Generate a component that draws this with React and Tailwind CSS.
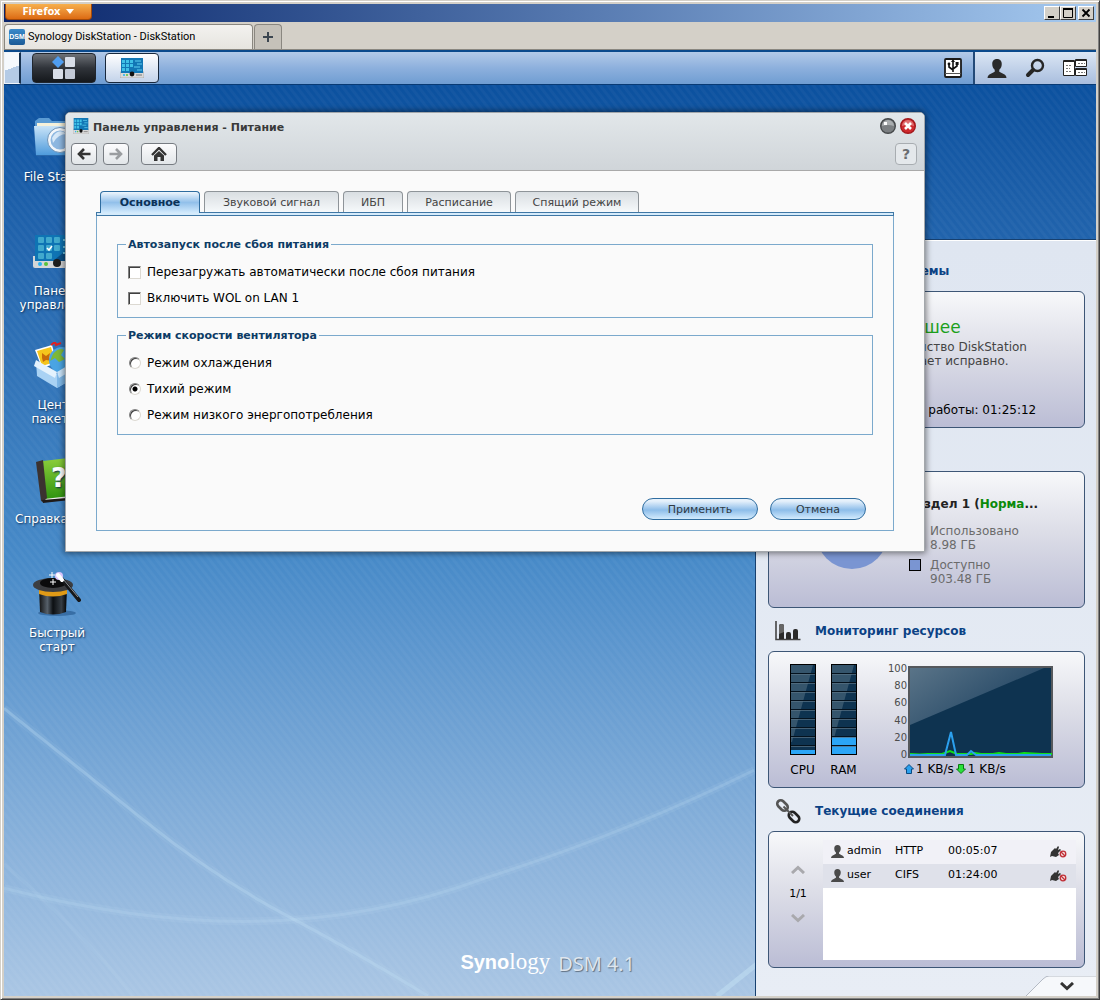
import React, { useState } from "react";

const desktopItems = [
  { id: "file", label: "File Station", icon: <FolderIcon /> },
  { id: "panel", label: "Панель управления", icon: <PanelIcon /> },
  { id: "packages", label: "Центр пакетов", icon: <PackageIcon /> },
  { id: "help", label: "Справка DSM", icon: <BookIcon /> },
  { id: "start", label: "Быстрый старт", icon: <HatIcon /> }
];

const tabs = [
  { label: "Основное", width: "w-[100px]" },
  { label: "Звуковой сигнал", width: "w-[135px]" },
  { label: "ИБП", width: "w-[60px]" },
  { label: "Расписание", width: "w-[104px]" },
  { label: "Спящий режим", width: "w-[124px]" }
];

const fanModes = [
  { id: "cool", label: "Режим охлаждения" },
  { id: "quiet", label: "Тихий режим" },
  { id: "low", label: "Режим низкого энергопотребления" }
];

const connections = [
  { user: "admin", type: "HTTP", time: "00:05:07", row: "bg-[#f1f1f7]" },
  { user: "user", type: "CIFS", time: "01:24:00", row: "bg-[#dfe1ea]" }
];

/* ---------- icons ---------- */

function FolderIcon() {
  return (
    <svg viewBox="0 0 48 48" className="size-12">
      <defs>
        <linearGradient id="folder" x1="0" y1="0" x2="0" y2="1">
          <stop offset="0" stopColor="#c9e4f8" />
          <stop offset="1" stopColor="#4f9bdc" />
        </linearGradient>
      </defs>
      <path d="M2 12V7l4-3h10l3 3h24v10H2z" fill="#5b9bd3" />
      <path d="M4 9h38v8H4z" fill="#f6f1da" />
      <path d="M1 12h46l-2 29H3z" fill="url(#folder)" />
      <path d="M3 41h42v1H3z" fill="#2a69ab" />
      <circle cx="27" cy="26" r="11" fill="#8db7e0" stroke="#f2f6fa" strokeWidth="3" />
      <circle cx="27" cy="26" r="12.500" fill="none" stroke="#6f94b8" />
      <path d="M19 24q6-11 15-4-9 0-14 9z" fill="#d6e8f8" />
      <path d="m35 34 7 8" stroke="#dde4ea" strokeWidth="4" />
    </svg>
  );
}

function PanelIcon() {
  return (
    <svg viewBox="0 0 48 48" className="size-12">
      <path d="M0 28h48v10q0 2-2 2H2q-2 0-2-2z" fill="#d4d6d8" />
      <path d="M2 7h44v26H2z" fill="#0f74b4" />
      <path d="M20 33 46 12v21z" fill="#0a4f86" />
      <g fill="#41a9cd">
        <rect x="5" y="9" width="6" height="6" rx="1" />
        <rect x="13" y="9" width="6" height="6" rx="1" />
        <rect x="21" y="9" width="6" height="6" rx="1" />
        <rect x="5" y="17" width="6" height="6" rx="1" />
        <rect x="13" y="17" width="6" height="6" rx="1" />
        <rect x="21" y="17" width="6" height="6" rx="1" />
        <rect x="5" y="25" width="6" height="6" rx="1" />
        <rect x="13" y="25" width="6" height="6" rx="1" />
      </g>
      <path d="M30 12h12M30 19h12M30 25h12" stroke="#6fc6e4" strokeWidth="2" />
      <path d="m14 20 2 2 3-4" stroke="#fff" strokeWidth="1.5" fill="none" />
      <circle cx="7" cy="36" r="2" fill="#28b2f4" />
      <circle cx="13" cy="36" r="2" fill="#58c23a" />
      <circle cx="24" cy="35" r="4" fill="#1d1d1d" />
      <path d="M32 36h12" stroke="#888" strokeWidth="2" />
    </svg>
  );
}

function PackageIcon() {
  return (
    <svg viewBox="0 0 48 48" className="size-12">
      <path d="m2 8 17-5 5 18-15 5z" fill="#fff" />
      <path d="m4 9 14-4 4 15-13 4z" fill="#f5c51c" />
      <path d="m9 11 4 3 4-3-1 5 3 3-6-1-3 2-1-4z" fill="#c86a08" />
      <circle cx="29" cy="18" r="13" fill="#4aa4e3" />
      <path d="M20 12q6-7 11-4l-3 5 4 4-6 3-4-4-5 3zM33 18l6-2-2 9-5-1z" fill="#7db83a" />
      <path d="m18 3 4-3 1 3 5-2" stroke="#d22" strokeWidth="2" fill="none" />
      <path d="M3 19 24 32 46 19v14L24 46 4 34z" fill="#a9d2f4" />
      <path d="M24 32 46 19v14L24 46z" fill="#7fb8e8" />
      <path d="m3 18 21 12-2 6L1 24z" fill="#e4f2fd" />
      <path d="m24 30 22-13 2 6-22 13z" fill="#c9e4fa" />
    </svg>
  );
}

function BookIcon() {
  return (
    <svg viewBox="0 0 48 48" className="size-12">
      <defs>
        <linearGradient id="book" x1="0" y1="0" x2="0" y2="1">
          <stop offset="0" stopColor="#8fd03c" />
          <stop offset="1" stopColor="#2f9410" />
        </linearGradient>
      </defs>
      <path d="m9 42 35-3 1 3-34 4z" fill="#f0f0f0" />
      <path d="m10 5 34-4 2 38-35 4z" fill="url(#book)" />
      <path d="m3 6 7-2 4 38-4 4-2-1z" fill="#3b3230" />
      <path d="m9 44 37-3v2l-36 4z" fill="#1f1a18" />
      <text x="18" y="31" className="fill-white font-['DejaVu_Sans'] text-[27px] font-bold">
        ?
      </text>
    </svg>
  );
}

function HatIcon() {
  return (
    <svg viewBox="0 0 48 48" className="size-12">
      <defs>
        <linearGradient id="hat" x1="0" y1="0" x2="1" y2="0">
          <stop offset="0" stopColor="#111" />
          <stop offset="0.3" stopColor="#56606a" />
          <stop offset="0.5" stopColor="#0c0f12" />
          <stop offset="0.8" stopColor="#363d44" />
          <stop offset="1" stopColor="#000" />
        </linearGradient>
      </defs>
      <ellipse cx="24" cy="43" rx="19" ry="3" fill="#24568c" opacity="0.6" />
      <path d="M6 18h28l-1 24q-13 5-26 0z" fill="url(#hat)" />
      <path d="M6 19h28v5q-14 5-28 0z" fill="#e09a16" />
      <ellipse cx="20" cy="15" rx="20" ry="7" fill="#3c3d40" />
      <ellipse cx="20" cy="13" rx="13" ry="5" fill="#0b0b0c" />
      <path d="m28 8 18 22" stroke="#17181a" strokeWidth="4" strokeLinecap="round" />
      <path d="m30 9 15 18" stroke="#8d9298" />
      <circle cx="26" cy="6" r="4" fill="#d9c4fb" />
      <path d="m25 5 4 5" stroke="#fff" strokeWidth="4" strokeLinecap="round" />
      <path d="M19 2v6M16 5h6M20 9v6M17 12h6" stroke="#fff" />
    </svg>
  );
}

function MiniPanelIcon({ className }) {
  return (
    <svg viewBox="0 0 24 20" preserveAspectRatio="none" className={className}>
      <path d="M0 14h24v5q0 1-1 1H1q-1 0-1-1z" fill="#d9d9d9" stroke="#8f8f8f" strokeWidth="0.5" />
      <path d="M1 0h22v15H1z" fill="#1277b5" />
      <path d="M2 2h3v3H2zM6 2h3v3H6zM10 2h3v3h-3zM2 6h3v3H2zM6 6h3v3H6zM10 6h3v3h-3zM2 10h3v3H2zM6 10h3v3H6z" fill="#3fc0e6" />
      <path d="M15 3h6M17 6h5M14 9h6M17 12h5" stroke="#5fd0f0" />
      <circle cx="4" cy="17" r="1" fill="#20b0f0" />
      <circle cx="7" cy="17" r="1" fill="#58c23a" />
      <circle cx="12" cy="16" r="2.4" fill="#111" />
      <path d="M16 17h6" stroke="#777" />
    </svg>
  );
}

function UsbIcon() {
  return (
    <svg viewBox="0 0 20 22" className="h-[22px] w-5">
      <rect x="2" y="2" width="16" height="18" rx="1" fill="#fff" stroke="#1b1b1b" strokeWidth="1.800" />
      <path d="M2 16.500h16" stroke="#555" />
      <path d="M10 15V4M10 13 6 10V7M10 12l4-3V6" stroke="#111" strokeWidth="1.6" fill="none" />
      <path d="m8 5 2-3 2 3z" fill="#111" />
      <circle cx="6" cy="7" r="1.4" fill="#111" />
      <path d="M12.600 5h3v3h-3z" fill="#111" />
    </svg>
  );
}

function PersonIcon({ className }) {
  return (
    <svg viewBox="0 0 20 20" className={className} fill="currentColor">
      <path d="M10 0c3.500 0 5 2.400 5 5.200 0 2.800-1.200 5-2.600 6.200v2l5.600 3Q20 17.600 20 20H0q0-2.400 2-3.600l5.600-3v-2C6.200 10.200 5 8 5 5.200 5 2.400 6.500 0 10 0z" />
    </svg>
  );
}

function SearchIcon() {
  return (
    <svg viewBox="0 0 20 20" className="size-5" fill="none" stroke="#262626">
      <circle cx="12.500" cy="7.500" r="5.500" strokeWidth="2.400" />
      <path d="m8 12-5 5" strokeWidth="4" strokeLinecap="round" />
    </svg>
  );
}

function PilotIcon() {
  return (
    <svg viewBox="0 0 24 18" className="h-[18px] w-6" fill="#fff" stroke="#222">
      <path d="M.5 1.500h11v15H.5zM12.500.5h11v7h-11zM12.500 9.500h11v7h-11z" />
      <path d="M1 2h10M13 1h10M13 10h10" strokeWidth="2" />
      <path d="M3 6.500h6M3 9.500h4M3 12.500h6M15 4.500h7M15 13.500h7" stroke="#777" strokeDasharray="2 1" />
    </svg>
  );
}

function ArrowIcon({ className }) {
  return (
    <svg viewBox="0 0 14 12" className={className} fill="none" stroke="currentColor" strokeWidth="2.600">
      <path d="M13.500 6H2M7 1 2 6l5 5" />
    </svg>
  );
}

function HomeIcon() {
  return (
    <svg viewBox="0 0 16 14" className="h-3.5 w-4">
      <path d="m1 8 7-7 7 7" fill="none" stroke="#333" strokeWidth="2.400" />
      <path d="M3 8.500 8 4l5 4.500V14h-3.500v-4h-3v4H3z" fill="#333" />
    </svg>
  );
}

function BarsIcon() {
  return (
    <svg viewBox="0 0 26 20" className="h-5 w-[26px]">
      <path d="M1 0v18.500h24.500" stroke="#444" strokeWidth="1.600" fill="none" />
      <path d="M4 18V5q0-2 2-2h1q2 0 2 2v13zM11 18v-5q0-2 2-2h1q2 0 2 2v5zM18 18v-8q0-2 2-2h1q2 0 2 2v8z" fill="#2b2b2b" />
      <path d="M4 13V5q0-2 2-2h1q2 0 2 2v6z" fill="#666" />
    </svg>
  );
}

function ChainIcon() {
  return (
    <svg viewBox="0 0 26 26" className="size-[26px]" fill="none" strokeWidth="2.600">
      <rect x="1.500" y="4" width="12" height="7" rx="3.500" transform="rotate(45 7.500 7.500)" stroke="#555" />
      <rect x="13" y="15.500" width="12" height="7" rx="3.500" transform="rotate(45 19 19)" stroke="#222" />
      <path d="m8.500 8.500 9.500 9.500" stroke="#555" strokeWidth="2" />
    </svg>
  );
}

function DisksIcon() {
  return (
    <svg viewBox="0 0 26 20" className="h-5 w-[26px]" fill="#333">
      <path d="M3 2h20v4H3zM3 8h20v4H3zM3 14h20v4H3z" />
    </svg>
  );
}

function PlugIcon() {
  return (
    <svg viewBox="0 0 17 12" className="h-3 w-[17px]">
      <path d="m0 11 1-5 4-4 1 1 2-3 1 1-1 3 2-1 1 1-3 3 1 2-3 2-4-1z" fill="#333" />
      <circle cx="13" cy="8" r="2.800" fill="#f4dede" stroke="#c03038" strokeWidth="1.300" />
      <path d="m11 6 4 4" stroke="#c03038" strokeWidth="1.300" />
    </svg>
  );
}

function ChevronIcon({ className, up }) {
  return (
    <svg viewBox="0 0 14 9" className={className} fill="none" stroke="currentColor" strokeWidth="3">
      <path d={up ? "m1 8 6-5.500L13 8" : "m1 1 6 5.500L13 1"} />
    </svg>
  );
}

/* ---------- browser frame ---------- */

const sysButton =
  "flex h-[14px] w-4 items-center justify-center border border-t-white border-l-white border-r-[#404040] border-b-[#404040] bg-[#d4d0c8]";

function BrowserFrame() {
  return (
    <header>
      <div className="flex h-[18px] items-center justify-between bg-linear-to-r from-[#0a246a] to-[#a6caf0] pr-0.5">
        <button
          type="button"
          className="ml-px flex h-4 w-[87px] items-center justify-center gap-[6px] self-start rounded-b border border-t-0 border-[#a3490a] bg-linear-to-b from-[#f6b04c] to-[#dc6a10] font-['Noto_Sans',sans-serif] text-[11px] font-bold text-white"
        >
          Firefox
          <svg viewBox="0 0 8 5" className="h-[5px] w-2" fill="#fff">
            <path d="M0 0h8L4 5z" />
          </svg>
        </button>
        <div className="flex">
          <button type="button" aria-label="Свернуть" className={sysButton}>
            <svg viewBox="0 0 10 10" className="size-2.5">
              <path d="M1 8h6v2H1z" />
            </svg>
          </button>
          <button type="button" aria-label="Развернуть" className={sysButton}>
            <svg viewBox="0 0 10 10" className="size-2.5" fill="none" stroke="#000">
              <path d="M.5 1v8.500h9V1M0 1h10" />
              <path d="M0 1h10" strokeWidth="2" />
            </svg>
          </button>
          <button type="button" aria-label="Закрыть" className={`${sysButton} ml-0.5`}>
            <svg viewBox="0 0 10 10" className="size-2.5" stroke="#000" strokeWidth="1.800">
              <path d="m1.500 1.500 7 7M8.500 1.500l-7 7" />
            </svg>
          </button>
        </div>
      </div>
      <div className="flex h-7 items-end border-b border-[#8a8780] bg-[#d4d0c8]">
        <div className="flex h-[25px] w-[249px] items-center gap-[3px] rounded-t border border-b-0 border-[#8a8780] bg-linear-to-b from-[#f3f2ef] to-[#e6e4df] pl-[4px] font-['Roboto',sans-serif] text-[11px] text-black">
          <span className="flex size-4 items-center justify-center rounded-xs bg-linear-to-b from-[#3a8acb] to-[#1b5a96] font-['Liberation_Sans'] text-[7px] font-bold text-white">
            DSM
          </span>
          Synology DiskStation - DiskStation
        </div>
        <button
          type="button"
          aria-label="Новая вкладка"
          className="ml-px flex h-[25px] w-7 items-center justify-center rounded-t border border-b-0 border-[#8a8780] bg-[#c5c1b9]"
        >
          <svg viewBox="0 0 10 10" className="size-2.5" stroke="#3c4650" strokeWidth="2">
            <path d="M5 0v10M0 5h10" />
          </svg>
        </button>
      </div>
    </header>
  );
}

function TaskBar() {
  return (
    <nav className="flex h-[35px] items-stretch justify-between border-t-2 border-b border-t-[#0b4a8c] border-b-[#083a74] bg-linear-to-b from-[#b3cae8] via-[#8db0dd] to-[#6f9dd2]">
      <div className="flex items-center">
        <div className="h-full w-[17px] border border-r-2 border-[#eef4fb] border-r-[#16304e] bg-linear-160 from-[#f5f9fd] from-50% to-[#b4cbe6] to-50%" />
        <button
          type="button"
          aria-label="Главное меню"
          className="ml-[11px] flex h-[30px] w-16 items-center justify-center rounded border border-[#20262e] bg-linear-to-b from-[#6e7278] via-[#30343a] via-50% to-[#15181c]"
        >
          <svg viewBox="0 0 24 24" className="size-6">
            <path d="m6 0 6 6-6 6-6-6z" fill="#4f9df0" />
            <rect x="13" y="1" width="10" height="10" rx="1" fill="#d9dee8" />
            <rect x="1" y="13" width="10" height="10" rx="1" fill="#d9dee8" />
            <rect x="13" y="13" width="10" height="10" rx="1" fill="#c3c9d6" />
          </svg>
        </button>
        <button
          type="button"
          aria-label="Панель управления"
          className="ml-[9px] flex h-[30px] w-[54px] items-center justify-center rounded border border-[#18283c] bg-linear-to-b from-white to-[#c3d3ea]"
        >
          <MiniPanelIcon className="h-5 w-6" />
        </button>
      </div>
      <div className="flex items-center">
        <button type="button" aria-label="USB" className="mr-[10px]">
          <UsbIcon />
        </button>
        <div className="flex h-full w-[123px] items-center gap-[18px] border-l-2 border-[#234a78] bg-linear-to-b from-[#dbe6f4] to-[#a9bede] pl-3 text-[#2a2a2a]">
          <button type="button" aria-label="Пользователь">
            <PersonIcon className="h-[19px] w-5" />
          </button>
          <button type="button" aria-label="Поиск">
            <SearchIcon />
          </button>
          <button type="button" aria-label="Окна">
            <PilotIcon />
          </button>
        </div>
      </div>
    </nav>
  );
}

/* ---------- widgets ---------- */

function Widget({ title, icon, children }) {
  return (
    <section>
      <h2 className="flex h-[43px] items-center gap-[14px] pt-0.5 pl-[7px] text-[12px] font-bold text-[#0b4285]">
        <span className="w-[26px]">{icon}</span>
        {title}
      </h2>
      <div className="h-[137px] overflow-hidden rounded-md border border-[#3d5676] bg-linear-to-b from-[#f7f8fa] via-[#dcdde7] via-45% to-[#bbbdd5]">
        {children}
      </div>
    </section>
  );
}

function Meter({ id, label, level }) {
  return (
    <div className="flex w-[27px] flex-col items-center">
      <svg viewBox="0 0 26 91" className="h-[91px] w-[26px]" role="img" aria-labelledby={id}>
        <rect width="26" height="91" fill="#000" />
        <rect x="1" y="1" width="24" height="89" fill="#0e3350" />
        <path d="M1 1h22L2 78H1z" fill="#35556c" />
        <rect x="1" y={90 - level} width="24" height={level} fill="#2ba6f7" />
        {[10, 19, 28, 37, 46, 55, 64, 73, 82].map((y) => (
          <g key={y}>
            <path d={`M1 ${y - 0.5}h24`} stroke="#04121e" />
            <path d={`M1 ${y + 0.5}h24`} stroke="#5b7485" strokeOpacity="0.700" />
          </g>
        ))}
      </svg>
      <span id={id} className="mt-2 text-[12px] leading-[14px] text-black">
        {label}
      </span>
    </div>
  );
}

function TrafficChart() {
  return (
    <svg viewBox="0 0 145 92" className="h-[92px] w-[145px]">
      <defs>
        <linearGradient id="gloss" x1="0" y1="0" x2="1" y2="0.600">
          <stop offset="0" stopColor="#5a7488" />
          <stop offset="1" stopColor="#1d4160" />
        </linearGradient>
      </defs>
      <rect x="1" y="1" width="143" height="90" fill="#0e3350" stroke="#55585c" strokeWidth="2" />
      <path d="M2 2h134L2 59z" fill="url(#gloss)" />
      <path d="M2 88q10 1 18 0h14l8-3 7 3h14l4-1 6 1h12l6-1 7 1h12l6-1 18 1h10" fill="none" stroke="#10e018" strokeWidth="2" />
      <path d="M2 89h35l6-23 5 23h11l4-4 5 4h75" fill="none" stroke="#2ba0ee" strokeWidth="2" />
    </svg>
  );
}

function ConnectionsTable() {
  return (
    <div className="mt-2 mr-2 h-30 flex-1 bg-white">
      <table className="w-full text-[11px] text-black">
        <tbody>
          {connections.map((item) => (
            <tr key={item.user} className={`h-6 ${item.row}`}>
              <td className="w-[72px] pb-0.5 pl-2">
                <span className="flex items-center gap-[3px]">
                  <PersonIcon className="h-[13px] w-[13px] text-[#4a4a4a]" />
                  {item.user}
                </span>
              </td>
              <td className="w-[53px] pb-0.5">{item.type}</td>
              <td className="pb-0.5">{item.time}</td>
              <td className="w-[26px]">
                <button type="button" aria-label="Отключить" className="block">
                  <PlugIcon />
                </button>
              </td>
            </tr>
          ))}
        </tbody>
      </table>
    </div>
  );
}

function WidgetPanel() {
  return (
    <aside className="mt-[154px] flex w-[341px] flex-col border-t border-l border-[#17406f] bg-linear-to-b from-[#dfe6f1] to-[#e8edf5]">
      <div className="flex-1 border-t border-white pt-[7px] pr-[11px] pl-[12px]">
        <Widget title="Состояние системы" icon={<DisksIcon />}>
          <div className="pt-[25px] pl-[90px]">
            <p className="text-[17px] leading-5 text-[#1ca01c]">Наилучшее</p>
            <p className="mt-[3px] ml-6 text-[12px] leading-[14px] text-[#444]">Устройство DiskStation</p>
            <p className="ml-6 text-[12px] leading-[14px] text-[#444]">работает исправно.</p>
            <p className="mt-[35px] ml-[26px] text-[12px] leading-[14px] text-black">Время работы: 01:25:12</p>
          </div>
        </Widget>
        <Widget title="Хранилище" icon={<DisksIcon />}>
          <p className="pt-[24px] pl-[138px] text-[12px] leading-4 font-bold text-[#222]">
            Раздел 1 (<span className="text-[#0a8a0a]">Норма</span>...
          </p>
          <div className="flex items-start pl-[46px] text-[12px] leading-[14px] text-[#6b6b6b]">
            <svg viewBox="0 0 74 74" className="mt-[-16px] size-[74px]">
              <circle cx="37" cy="37" r="36" fill="#7a95d2" />
            </svg>
            <dl className="mt-3 ml-[20px] space-y-[6px]">
              <div className="grid grid-cols-[12px_1fr] items-center gap-x-[9px]">
                <dt className="col-start-2">Использовано</dt>
                <dd className="col-start-2">8.98 ГБ</dd>
              </div>
              <div className="grid grid-cols-[12px_1fr] items-center gap-x-[9px]">
                <span className="size-3 border border-black bg-[#7a95d2]" />
                <dt>Доступно</dt>
                <dd className="col-start-2">903.48 ГБ</dd>
              </div>
            </dl>
          </div>
        </Widget>
        <Widget title="Мониторинг ресурсов" icon={<BarsIcon />}>
          <div className="flex pt-[12px] pl-[20px]">
            <Meter id="cpu" label="CPU" level={4} />
            <div className="ml-[14px]">
              <Meter id="ram" label="RAM" level={18} />
            </div>
            <div className="ml-[26px] flex flex-col">
              <div className="flex items-center gap-px">
                <div className="flex h-24 w-[24px] flex-col justify-between text-right text-[10px] leading-[10px] text-[#4c4c4c]">
                  <span>100</span>
                  <span>80</span>
                  <span>60</span>
                  <span>40</span>
                  <span>20</span>
                  <span>0</span>
                </div>
                <TrafficChart />
              </div>
              <p className="mt-px flex items-center gap-0.5 pl-[21px] text-[12px] leading-4 text-black">
                <svg viewBox="0 0 10 10" className="size-2.5" fill="#2ba0ee" stroke="#0b4a80">
                  <path d="m5 .5 4.500 4.500H7.500v4.500h-5V5H.5z" />
                </svg>
                1 KB/s
                <svg viewBox="0 0 10 10" className="size-2.5" fill="#2be03a" stroke="#0a7a14">
                  <path d="M5 9.500.5 5h2V.5h5V5h2z" />
                </svg>
                1 KB/s
              </p>
            </div>
          </div>
        </Widget>
        <Widget title="Текущие соединения" icon={<ChainIcon />}>
          <div className="flex">
            <div className="flex w-[54px] flex-col items-center justify-center gap-3 pb-1 pl-1 text-[11px] text-black">
              <button type="button" aria-label="Назад">
                <ChevronIcon up className="h-[9px] w-3.5 text-[#a9a9ad]" />
              </button>
              1/1
              <button type="button" aria-label="Вперёд">
                <ChevronIcon className="h-[9px] w-3.5 text-[#a9a9ad]" />
              </button>
            </div>
            <ConnectionsTable />
          </div>
        </Widget>
      </div>
      <button type="button" aria-label="Свернуть виджеты" className="relative mt-[8px] h-5 w-[70px] self-end pl-3">
        <svg viewBox="0 0 70 20" className="absolute inset-0 size-full">
          <path d="M0 20 17 3q3-3 6-3h47v20z" fill="#f6f8fb" />
          <path d="M0 20 17 3q3-3 6-3h47" fill="none" stroke="#b4bac4" />
        </svg>
        <ChevronIcon className="relative mx-auto h-[9px] w-3.5 text-[#333]" />
      </button>
    </aside>
  );
}

/* ---------- control panel window ---------- */

const toolButton =
  "flex h-[22px] items-center justify-center rounded border border-[#777c82] bg-linear-to-b from-[#fcfcfd] to-[#e2e6e9] text-[#333]";

const actionButton =
  "h-[22px] rounded-full border border-[#2f6da0] bg-linear-to-b from-[#e6f1fb] from-10% via-[#8dbde9] via-55% to-[#d3ebfd] pt-0.5 text-[11px] text-[#2f3a44]";

const fieldBox = "w-full border border-[#7ba9cc] px-2 pb-[6px]";
const fieldLegend = "px-0.5 pt-px text-[11px] leading-[13px] font-bold text-[#0d3c66]";
const sunken =
  "appearance-none border border-t-[#808080] border-r-[#dcd9d2] border-b-[#dcd9d2] border-l-[#808080] bg-white shadow-[inset_1px_1px_0_#404040]";

function PowerWindow() {
  const [activeTab, setActiveTab] = useState(tabs[0].label);
  const [fanMode, setFanMode] = useState("quiet");

  return (
    <main className="absolute top-[27px] left-[61px] w-[860px] rounded-t-[5px] border border-[#a3a7ab] bg-[#fafafa] shadow-[0_0_6px_1px_rgba(0,0,0,0.5)]">
      <div className="rounded-t border-b border-[#a9a9a9] bg-linear-to-b from-[#e2e7ea] to-[#d0d5d9] pr-[7px] pb-[5px] pl-[5px]">
        <div className="flex h-[30px] items-center justify-between">
          <h1 className="flex items-center gap-1 pl-0.5 text-[11px] font-bold text-[#3a3a3a]">
            <MiniPanelIcon className="mb-1 h-4 w-4" />
            Панель управления - Питание
          </h1>
          <div className="flex gap-[4px] pr-px pb-1">
            <button type="button" aria-label="Свернуть окно">
              <svg viewBox="0 0 16 16" className="size-4">
                <circle cx="8" cy="8" r="7.300" fill="#7b7f82" stroke="#45484a" strokeWidth="1.400" />
                <path d="M2 8a6 6 0 0 1 12 0q-6-2-12 0z" fill="#a9adaf" />
                <rect x="4" y="4" width="3" height="3" fill="#fff" />
              </svg>
            </button>
            <button type="button" aria-label="Закрыть окно">
              <svg viewBox="0 0 16 16" className="size-4">
                <circle cx="8" cy="8" r="7.300" fill="#cf2a2e" stroke="#a3181c" strokeWidth="1.400" />
                <path d="M2 8a6 6 0 0 1 12 0q-6-2-12 0z" fill="#df7072" />
                <path d="m5 5 6 6M11 5l-6 6" stroke="#fff" strokeWidth="2.600" />
              </svg>
            </button>
          </div>
        </div>
        <div className="flex items-center">
          <button type="button" aria-label="Назад" className={`${toolButton} w-[26px]`}>
            <ArrowIcon className="h-3 w-3.5" />
          </button>
          <button type="button" aria-label="Вперёд" className={`${toolButton} ml-[6px] w-[26px]`}>
            <ArrowIcon className="h-3 w-3.5 rotate-180 text-[#9a9da0]" />
          </button>
          <button type="button" aria-label="Домой" className={`${toolButton} ml-3 w-9`}>
            <HomeIcon />
          </button>
          <button
            type="button"
            className="ml-auto h-[22px] w-[22px] rounded border border-[#a8adb1] bg-[#e4e8eb] text-[14px] leading-5 font-bold text-[#6a6d70]"
          >
            ?
          </button>
        </div>
      </div>

      <div className="px-[30px] pt-5 pb-5">
        <div className="flex items-start gap-1 pl-[4px]" role="tablist">
          {tabs.map(({ label, width }) => (
            <button
              key={label}
              type="button"
              role="tab"
              aria-selected={label === activeTab}
              onClick={() => setActiveTab(label)}
              className={`${width} rounded-t border border-b-0 pt-0.5 text-[11px] ${
                label === activeTab
                  ? "z-10 -mb-px h-[22px] border-[#2f6da0] bg-linear-to-b from-[#eef6fd] via-[#92c0ea] via-50% to-[#d3ebfd] font-bold text-[#0b3258]"
                  : "h-[21px] border-[#8e9499] bg-linear-to-b from-[#d9dee2] to-[#f6f9fb] text-[#444]"
              }`}
            >
              {label}
            </button>
          ))}
        </div>
        <div className="h-1 border border-[#3f77a5] bg-[#d5ebfb]" />
        <form
          className="border border-t-0 border-[#7ba9cc] px-5 pt-[21px] pb-[10px]"
          onSubmit={(event) => event.preventDefault()}
        >
          <fieldset className={fieldBox}>
            <legend className={fieldLegend}>Автозапуск после сбоя питания</legend>
            <div className="pt-2">
              {["Перезагружать автоматически после сбоя питания", "Включить WOL on LAN 1"].map((label) => (
                <label key={label} className="flex h-[26px] items-center gap-[6px] pl-0.5 text-[12px] text-black">
                  <input type="checkbox" className={`${sunken} size-[13px] checked:bg-[#555]`} />
                  {label}
                </label>
              ))}
            </div>
          </fieldset>

          <fieldset className={`${fieldBox} mt-[10px]`}>
            <legend className={fieldLegend}>Режим скорости вентилятора</legend>
            <div className="pt-2">
              {fanModes.map((mode) => (
                <label key={mode.id} className="flex h-[26px] items-center gap-[6px] pl-[3px] text-[12px] text-black">
                  <input
                    type="radio"
                    name="fan"
                    checked={fanMode === mode.id}
                    onChange={() => setFanMode(mode.id)}
                    className={`${sunken} size-3 rounded-full checked:bg-[radial-gradient(circle,#000_2px,#fff_3px)]`}
                  />
                  {mode.label}
                </label>
              ))}
            </div>
          </fieldset>

          <div className="mt-[63px] flex justify-end gap-3 pr-[7px]">
            <button type="submit" className={`${actionButton} w-[116px]`}>
              Применить
            </button>
            <button type="button" className={`${actionButton} w-24`}>
              Отмена
            </button>
          </div>
        </form>
      </div>
    </main>
  );
}

/* ---------- desktop ---------- */

function Wallpaper() {
  return (
    <svg
      viewBox="0 0 1092 912"
      preserveAspectRatio="none"
      className="pointer-events-none absolute inset-0 size-full"
      fill="none"
      stroke="#c4e2f4"
    >
      <defs>
        <pattern id="stripes" width="6" height="6" patternUnits="userSpaceOnUse" patternTransform="rotate(-38)">
          <path d="M1.500 0v6" stroke="#fff" strokeWidth="3" strokeOpacity="0.030" />
        </pattern>
      </defs>
      <rect width="1092" height="912" fill="url(#stripes)" stroke="none" />
      <path d="M0 624Q70 680 141 737T282 831 424 912" strokeWidth="8" strokeOpacity="0.100" />
      <path d="M0 624Q70 680 141 737T282 831 424 912" strokeWidth="3" strokeOpacity="0.300" />
      <path d="M0 804C180 850 330 850 481 794Q620 750 750 686" strokeWidth="8" strokeOpacity="0.100" />
      <path d="M0 804C180 850 330 850 481 794Q620 750 750 686" strokeWidth="3" strokeOpacity="0.200" />
      <path d="m713 912 40-32" strokeWidth="5" strokeOpacity="0.500" />
      <path d="M0 780q70 60 130 132" strokeWidth="4" strokeOpacity="0.100" />
    </svg>
  );
}

export default function App() {
  return (
    <div className="flex min-h-screen flex-col border border-[#d4d0c8] border-r-[#404040] border-b-[#404040] bg-[#d4d0c8] p-[3px] font-['DejaVu_Sans',sans-serif] shadow-[inset_1px_1px_0_#fff,inset_-1px_-1px_0_#808080]">
      <BrowserFrame />
      <TaskBar />
      <div className="relative flex flex-1 items-stretch justify-between bg-linear-to-b from-[#0b519f] via-[#478ac8] via-52% to-[#aac6e4]">
        <Wallpaper />
        <ul className="relative flex w-[106px] flex-col pt-[29px]">
          {desktopItems.map((item) => (
            <li key={item.id} className="h-[114px]">
              <button
                type="button"
                className="flex w-full flex-col items-center gap-2 px-2 text-[12px] leading-[14px] text-white text-shadow-[1px_1px_2px_#0a2a50]"
              >
                {item.icon}
                {item.label}
              </button>
            </li>
          ))}
        </ul>
        <div className="relative flex flex-1 items-end justify-end pr-[120px] pb-[18px] text-white">
          <p className="flex items-end gap-2">
            <span className="text-[23px] leading-8">
              <span className="font-['Liberation_Sans'] text-[20px] font-bold">Syno</span>
              <span className="font-['Liberation_Serif']">logy</span>
            </span>
            <span className="font-['Open_Sans'] text-[20px] leading-[28px] text-[#dfe6ee] text-shadow-[1px_1px_1px_#5f6f80]">
              DSM 4.1
            </span>
          </p>
        </div>
        <div className="relative flex">
          <WidgetPanel />
        </div>
        <PowerWindow />
      </div>
    </div>
  );
}
